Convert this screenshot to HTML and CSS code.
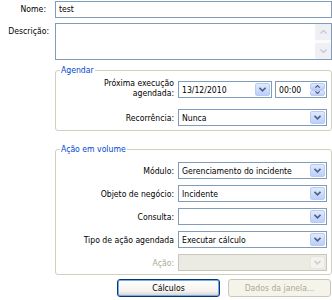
FILE: index.html
```html
<!DOCTYPE html>
<html lang="pt">
<head>
    <meta charset="UTF-8">
    <title>Agendar</title>
    <link rel="stylesheet" href="styles.css">
</head>
<body>
    <div class="form">
        <div class="row">
            <label class="lbl">Nome:</label>
            <div class="box text">test</div>
        </div>
        <div class="row row-desc">
            <label class="lbl">Descrição:</label>
            <div class="box area">
                <div class="vscroll">
                    <span class="sbtn">
                        <svg width="7" height="4" viewBox="0 0 7 4"><path d="M0.5 3.5 L3.5 0.5 L6.5 3.5" fill="none" stroke="#c3c8d2" stroke-width="1.2"/></svg>
                    </span>
                    <span class="strack"></span>
                    <span class="sbtn">
                        <svg width="7" height="4" viewBox="0 0 7 4"><path d="M0.5 0.5 L3.5 3.5 L6.5 0.5" fill="none" stroke="#c3c8d2" stroke-width="1.2"/></svg>
                    </span>
                </div>
            </div>
        </div>

        <fieldset class="group group-sched">
            <legend>Agendar</legend>
            <div class="grid">
                <label class="glbl two"><span>Próxima execução<br>agendada:</span></label>
                <div class="pair">
                    <div class="box combo date">
                        <span class="val">13/12/2010</span>
                        <span class="dd"><svg width="7" height="5" viewBox="0 0 7 5"><path d="M0.5 0.8 L3.5 3.8 L6.5 0.8" fill="none" stroke="#4d6185" stroke-width="1.6"/></svg></span>
                    </div>
                    <div class="box combo time">
                        <span class="val">00:00</span>
                        <span class="spin">
                            <span class="sp"><svg width="5" height="3" viewBox="0 0 5 3"><path d="M0.3 2.7 L2.5 0.5 L4.7 2.7" fill="none" stroke="#4d6185" stroke-width="1.2"/></svg></span>
                            <span class="sp"><svg width="5" height="3" viewBox="0 0 5 3"><path d="M0.3 0.3 L2.5 2.5 L4.7 0.3" fill="none" stroke="#4d6185" stroke-width="1.2"/></svg></span>
                        </span>
                    </div>
                </div>
                <label class="glbl">Recorrência:</label>
                <div class="box combo">
                    <span class="val">Nunca</span>
                    <span class="dd"><svg width="7" height="5" viewBox="0 0 7 5"><path d="M0.5 0.8 L3.5 3.8 L6.5 0.8" fill="none" stroke="#4d6185" stroke-width="1.6"/></svg></span>
                </div>
            </div>
        </fieldset>

        <fieldset class="group group-bulk">
            <legend>Ação em volume</legend>
            <div class="grid">
                <label class="glbl">Módulo:</label>
                <div class="box combo">
                    <span class="val">Gerenciamento do incidente</span>
                    <span class="dd"><svg width="7" height="5" viewBox="0 0 7 5"><path d="M0.5 0.8 L3.5 3.8 L6.5 0.8" fill="none" stroke="#4d6185" stroke-width="1.6"/></svg></span>
                </div>
                <label class="glbl">Objeto de negócio:</label>
                <div class="box combo">
                    <span class="val">Incidente</span>
                    <span class="dd"><svg width="7" height="5" viewBox="0 0 7 5"><path d="M0.5 0.8 L3.5 3.8 L6.5 0.8" fill="none" stroke="#4d6185" stroke-width="1.6"/></svg></span>
                </div>
                <label class="glbl">Consulta:</label>
                <div class="box combo">
                    <span class="val"></span>
                    <span class="dd"><svg width="7" height="5" viewBox="0 0 7 5"><path d="M0.5 0.8 L3.5 3.8 L6.5 0.8" fill="none" stroke="#4d6185" stroke-width="1.6"/></svg></span>
                </div>
                <label class="glbl">Tipo de ação agendada</label>
                <div class="box combo">
                    <span class="val">Executar cálculo</span>
                    <span class="dd"><svg width="7" height="5" viewBox="0 0 7 5"><path d="M0.5 0.8 L3.5 3.8 L6.5 0.8" fill="none" stroke="#4d6185" stroke-width="1.6"/></svg></span>
                </div>
                <label class="glbl off">Ação:</label>
                <div class="box combo disabled">
                    <span class="val"></span>
                    <span class="dd"><svg width="7" height="5" viewBox="0 0 7 5"><path d="M0.5 0.8 L3.5 3.8 L6.5 0.8" fill="none" stroke="#d1d0c8" stroke-width="1.6"/></svg></span>
                </div>
            </div>
        </fieldset>

        <div class="actions">
            <button class="btn default">Cálculos</button>
            <button class="btn" disabled>Dados da janela...</button>
        </div>
    </div>
</body>
</html>
```

FILE: styles.css
```css
body {
    margin: 0;
    background: #fff;
    font-family: "DejaVu Sans Condensed", "Liberation Sans", sans-serif;
    font-size: 8.6px;
    color: #000;
}

.form {
    width: 332px;
    padding-top: 1px;
}

.row {
    display: flex;
    align-items: flex-start;
}

.row-desc { margin-top: 5px; }

.lbl {
    width: 46px;
    padding-right: 9px;
    text-align: right;
    line-height: 17px;
    flex: none;
}

.row-desc .lbl { width: 49px; padding-right: 6px; }

.box {
    box-sizing: border-box;
    border: 1px solid #7f9db9;
    background: #fff;
    height: 17px;
}

.text {
    width: 277px;
    line-height: 15px;
    padding-left: 3px;
}

.area {
    width: 277px;
    height: 37px;
    display: flex;
    justify-content: flex-end;
}

.vscroll {
    width: 16px;
    display: flex;
    flex-direction: column;
    background: #fbfbf9;
}

.sbtn {
    height: 16px;
    display: flex;
    align-items: center;
    justify-content: center;
    background: #eef0f3;
    border-radius: 2px;
}

.strack { flex: 1; }

.group {
    margin: 0 0 0 55px;
    padding: 0 4px 0 0;
    border: 1px solid #d0d0bf;
    border-radius: 3px;
    min-width: 0;
}

.group legend {
    color: #0046d5;
    padding: 0 1px;
    margin-left: 4px;
    line-height: 11px;
}

.group-sched {
    margin-top: 5px;
    padding-top: 5px;
    padding-bottom: 4px;
}

.group-bulk {
    margin-top: 13px;
    padding-top: 7px;
    padding-bottom: 3px;
}

.grid {
    display: grid;
    grid-template-columns: 1fr 149px;
    align-items: center;
}

.group-sched .grid { row-gap: 11px; }
.group-bulk .grid { row-gap: 6px; }

.glbl {
    text-align: right;
    padding-right: 4px;
    white-space: nowrap;
}

.glbl.two {
    height: 17px;
    display: flex;
    flex-direction: column;
    justify-content: flex-end;
    line-height: 10px;
}

.glbl.off { color: #aca899; }

.pair {
    display: flex;
    justify-content: space-between;
}

.combo {
    display: flex;
    align-items: center;
    padding: 0 1px 0 3px;
}

.combo .val {
    flex: 1;
    white-space: nowrap;
    overflow: hidden;
}

.date { width: 94px; }
.time { width: 52px; }

.dd {
    width: 15px;
    height: 13px;
    box-sizing: border-box;
    border: 1px solid #b9cbf3;
    border-radius: 2px;
    background: linear-gradient(#e0eafc, #bccffb);
    display: flex;
    align-items: center;
    justify-content: center;
}

.spin {
    width: 15px;
    height: 13px;
    display: flex;
    flex-direction: column;
}

.sp {
    flex: 1;
    border: 1px solid #b9cbf3;
    border-radius: 2px;
    background: linear-gradient(#e0eafc, #bccffb);
    display: flex;
    align-items: center;
    justify-content: center;
}

.disabled {
    background: #ebebe4;
    border-color: #c9c7ba;
}

.disabled .dd {
    background: #f3f3ef;
    border-color: #e6e6df;
}

.actions {
    display: flex;
    justify-content: flex-end;
    gap: 8px;
    padding: 4px 1px 0 0;
}

.btn {
    width: 103px;
    height: 18px;
    padding: 0;
    font: inherit;
    color: #000;
    border: 1px solid #003c74;
    border-radius: 3px;
    background: linear-gradient(#fff, #f4f3ee 70%, #d6d0c5);
}

.btn.default {
    box-shadow: inset 0 0 0 1px #7ea6e8;
}

.btn[disabled] {
    color: #aca899;
    border-color: #c9c7ba;
    background: #f5f4ea;
}
```
